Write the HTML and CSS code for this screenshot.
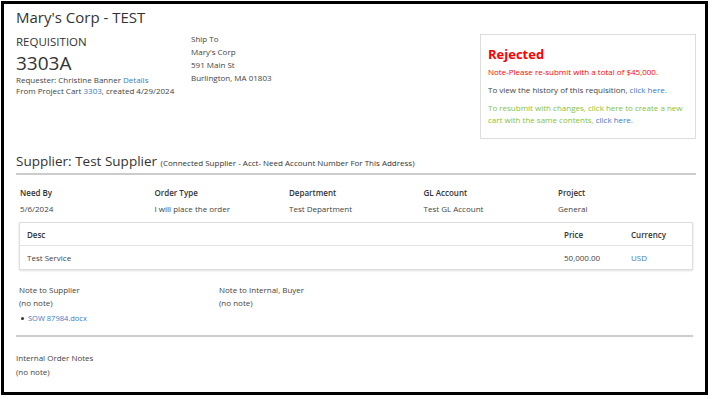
FILE: index.html
```html
<!DOCTYPE html>
<html>
<head>
<meta name="viewport" content="width=device-width, initial-scale=1">
<title>Requisition 3303A</title>
<link rel="stylesheet" href="styles.css">
</head>
<body>
  <div class="page">
    <h1 class="title">Mary's Corp - TEST</h1>

    <div class="top">
      <div class="req">
        <div class="req-label">REQUISITION</div>
        <div class="req-num">3303A</div>
        <div class="small">Requester: Christine Banner <a href="#">Details</a></div>
        <div class="small">From Project Cart <a href="#">3303</a>, created 4/29/2024</div>
      </div>
      <div class="ship">
        <div>Ship To</div>
        <div>Mary's Corp</div>
        <div>591 Main St</div>
        <div>Burlington, MA 01803</div>
      </div>
      <div class="status">
        <div class="status-title">Rejected</div>
        <p class="red">Note-Please re-submit with a total of $45,000.</p>
        <p>To view the history of this requisition, <a href="#">click here.</a></p>
        <p class="green">To resubmit with changes, click here to create a new cart with the same contents, <a href="#">click here.</a></p>
      </div>
    </div>

    <h2 class="supplier">Supplier: Test Supplier <span>(Connected Supplier - Acct- Need Account Number For This Address)</span></h2>

    <div class="fields">
      <div class="field"><b>Need By</b><span>5/6/2024</span></div>
      <div class="field"><b>Order Type</b><span>I will place the order</span></div>
      <div class="field"><b>Department</b><span>Test Department</span></div>
      <div class="field"><b>GL Account</b><span>Test GL Account</span></div>
      <div class="field"><b>Project</b><span>General</span></div>
    </div>

    <table class="lines">
      <tr>
        <th>Desc</th>
        <th class="price">Price</th>
        <th class="cur">Currency</th>
      </tr>
      <tr>
        <td>Test Service</td>
        <td class="price">50,000.00</td>
        <td class="cur"><a href="#">USD</a></td>
      </tr>
    </table>

    <div class="notes">
      <div class="note">
        <div>Note to Supplier</div>
        <div>(no note)</div>
        <ul class="files"><li><a href="#">SOW 87984.docx</a></li></ul>
      </div>
      <div class="note">
        <div>Note to Internal, Buyer</div>
        <div>(no note)</div>
      </div>
    </div>

    <div class="internal">
      <div>Internal Order Notes</div>
      <div>(no note)</div>
    </div>
  </div>
</body>
</html>
```

FILE: styles.css
```css
body {
  margin: 0;
  font-family: "Open Sans", "Liberation Sans", sans-serif;
  color: #444;
  background: #fff;
}

a {
  color: #3b7bbf;
  text-decoration: none;
}

.page {
  box-sizing: border-box;
  width: 707px;
  height: 394px;
  margin: 1px;
  border: 3px solid #000;
  padding: 3px 9px 0 12px;
  overflow: hidden;
}

.title {
  margin: 0;
  font-size: 15px;
  font-weight: normal;
  line-height: 20px;
  color: #333;
}

.top {
  display: flex;
  margin-top: 7px;
  height: 117px;
}

.req {
  width: 175px;
}

.req-label {
  font-size: 11.5px;
  line-height: 16px;
  color: #333;
}

.req-num {
  font-size: 19px;
  line-height: 22px;
  margin-top: 2px;
  color: #333;
}

.small {
  font-size: 8px;
  line-height: 11px;
}

.ship {
  font-size: 8px;
  line-height: 13px;
  margin-top: -2px;
}

.status {
  margin-left: auto;
  width: 216px;
  height: 105px;
  box-sizing: border-box;
  border: 1px solid #ddd;
  padding: 10px 7px 0 7px;
  font-size: 8px;
  line-height: 12px;
}

.status-title {
  color: #f00;
  font-weight: bold;
  font-size: 13px;
  line-height: 18px;
}

.status p {
  margin: 5px 0 6px;
}

.status .red {
  color: #f00;
  margin-top: 3px;
}

.status .green {
  color: #86c13b;
}

.supplier {
  margin: 0;
  padding: 0;
  border-bottom: 2px solid #ccc;
  font-size: 13.5px;
  font-weight: normal;
  line-height: 20px;
  color: #333;
}

.supplier span {
  font-size: 8px;
}

.fields {
  display: flex;
  padding: 10px 0 0 4px;
  font-size: 8px;
  line-height: 16px;
}

.field {
  width: 134.5px;
  display: flex;
  flex-direction: column;
}

.field b {
  font-weight: 600;
  color: #333;
}

.lines {
  width: 674px;
  margin: 5px 3px 0 3px;
  border-collapse: collapse;
  border: 1px solid #ddd;
  box-shadow: 0 1px 2px rgba(0, 0, 0, 0.12);
  font-size: 8px;
}

.lines th {
  text-align: left;
  font-weight: 600;
  color: #333;
  height: 22px;
  padding: 0 7px;
  border-bottom: 1px solid #e3e3e3;
}

.lines td {
  height: 23px;
  padding: 0 7px;
}

.lines .price {
  width: 53px;
}

.lines .cur {
  width: 54px;
}

.notes {
  display: flex;
  margin: 13px 0 0 3px;
  font-size: 8px;
  line-height: 13px;
}

.note {
  width: 200px;
}

.files {
  list-style: none;
  margin: 3px 0 0 0;
  padding-left: 2px;
  font-size: 7.5px;
}

.files li {
  display: flex;
  align-items: center;
}

.files li::before {
  content: "";
  width: 3px;
  height: 3px;
  border-radius: 50%;
  background: #333;
  margin-right: 4px;
}

.internal {
  margin: 10px 3px 0 0;
  padding-top: 14px;
  border-top: 2px solid #ccc;
  font-size: 8px;
  line-height: 14px;
}
```
